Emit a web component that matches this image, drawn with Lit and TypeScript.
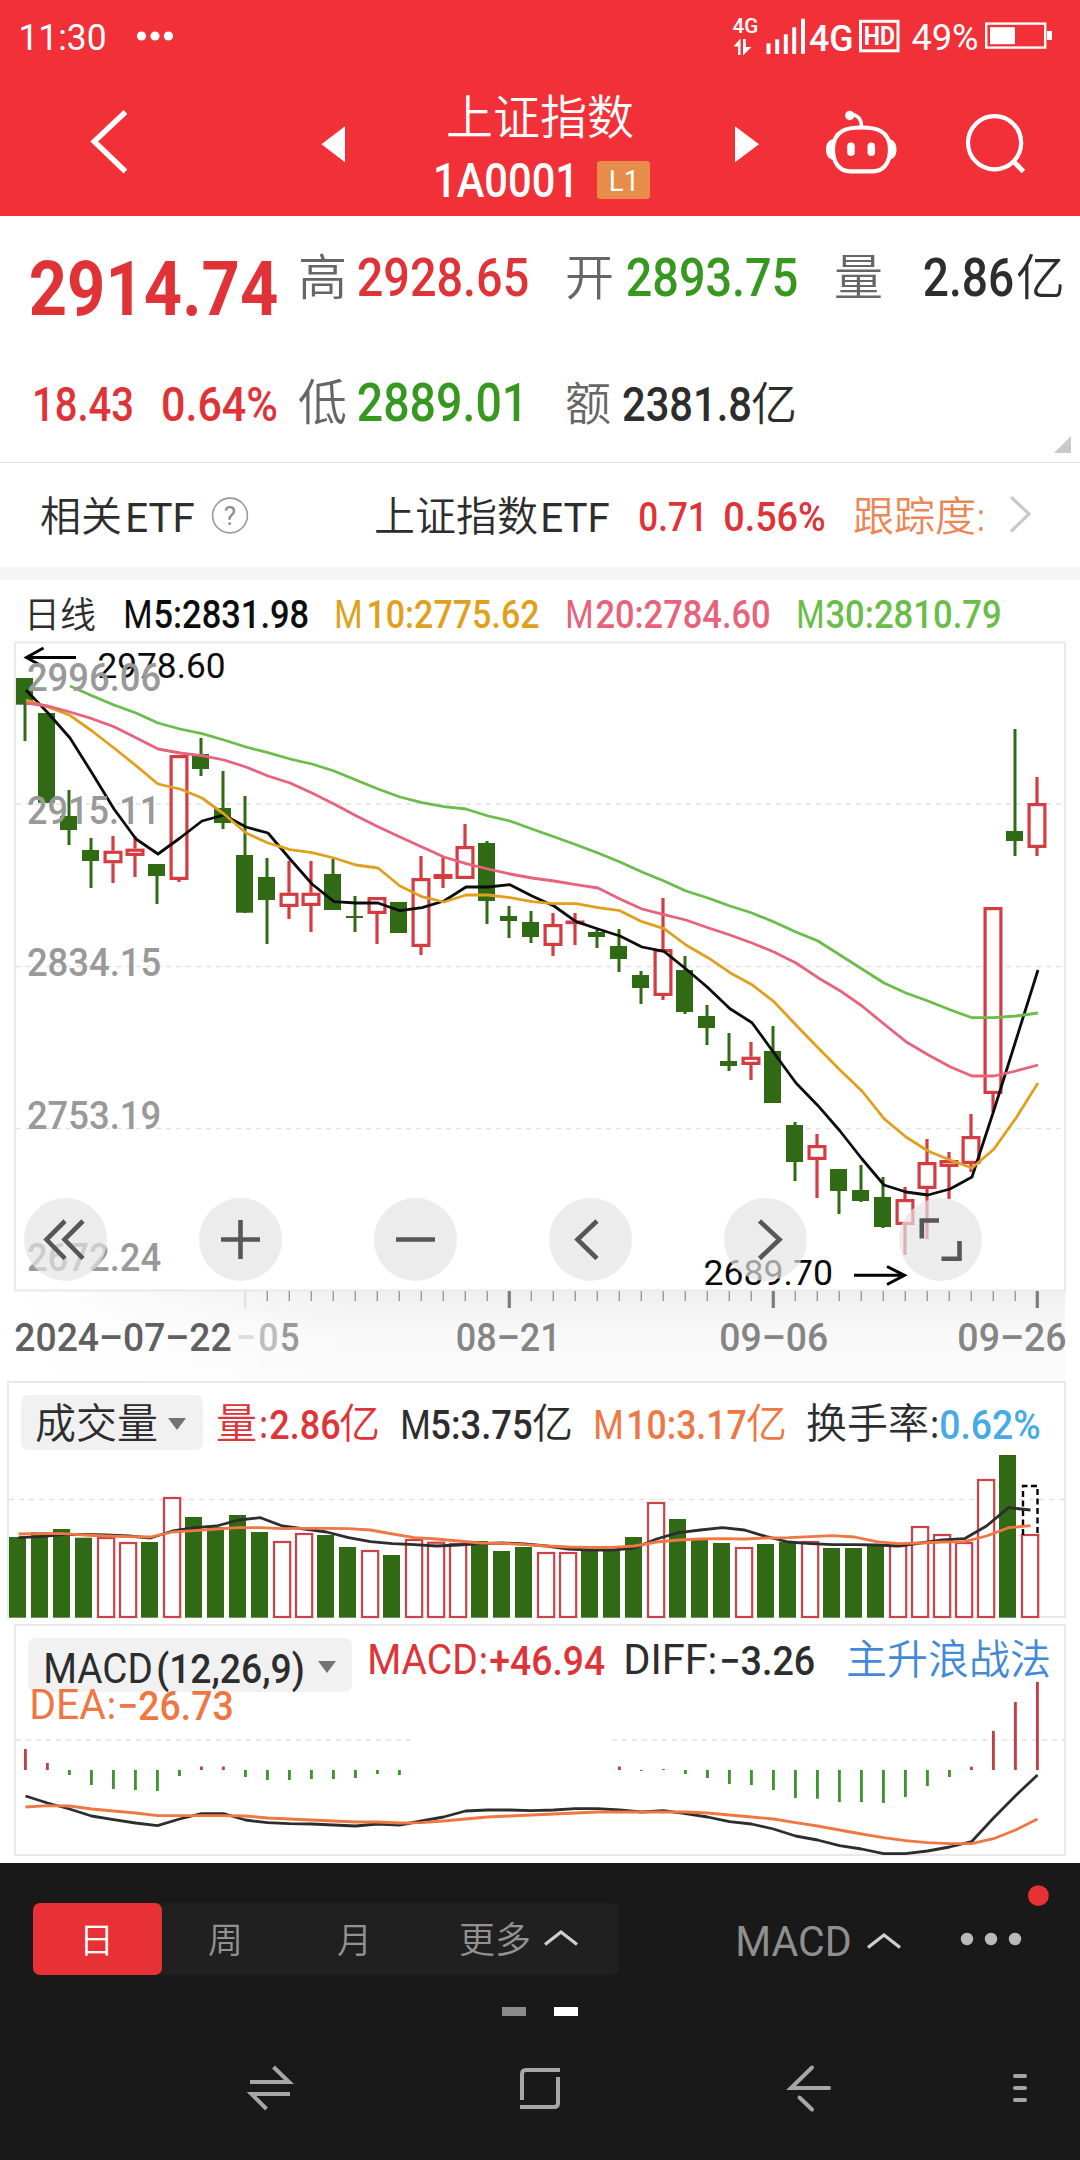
import { LitElement, html, svg, css } from "lit";
import { customElement } from "lit/decorators.js";

const PITCH = 22;

/** Latin or numeric run: the box is the ink box, its bottom edge is the baseline. */
const num = (text: string, width: number, cap: number, cls = "") => html`
  <svg class="run" width=${width} height=${cap}>
    <text class="num ${cls}" x=${-0.06 * cap} y=${cap} font-size=${cap / 0.711}
      textLength=${width + 0.12 * cap} lengthAdjust="spacingAndGlyphs">${text}</text>
  </svg>`;

/** Chinese run: one em per glyph, its bottom edge is the baseline. */
const han = (text: string, size: number, cls = "") => html`
  <svg class="run" width=${text.length * size} height=${Math.round(size * 0.7)}>
    <text class="han ${cls}" x="-1" y=${Math.round(size * 0.7)} font-size=${size}>${text}</text>
  </svg>`;

/** Text inside a chart, placed by its baseline. */
const mark = (text: string, x: number, y: number, width: number, cap: number, cls: string) => svg`
  <text class="num ${cls}" x=${x - 0.06 * cap} y=${y} font-size=${cap / 0.711}
    textLength=${width + 0.12 * cap} lengthAdjust="spacingAndGlyphs">${text}</text>`;

const line = (ys: number[], x0: number, cls: string, first = 0) => svg`
  <polyline class="line ${cls}" points=${ys.map((y, i) => `${x0 + (i + first) * PITCH},${y}`).join(" ")} />`;

// [direction, high, body top, body bottom, low]
type Candle = [string, number, number, number, number];
const CANDLES: Candle[] = [
  ["g", 678, 678, 704.7, 741], ["g", 713, 713, 802.7, 803], ["g", 790, 816, 830, 845], ["g", 838, 850, 861, 888],
  ["r", 836, 850.7, 863.3, 883], ["r", 836, 848.6, 856, 877], ["g", 864, 864, 876, 904], ["r", 755, 755, 880, 882],
  ["g", 738, 754, 769, 776], ["g", 771, 808, 823, 829], ["g", 796, 855, 912.7, 913], ["g", 858, 877, 900, 944],
  ["r", 861, 892.7, 907, 919], ["r", 861, 892.7, 906, 932], ["g", 859, 874, 910, 910], ["g", 896, 916, 918, 932],
  ["r", 897, 897, 914, 944], ["g", 902, 902, 933, 933], ["r", 856, 878, 947, 955], ["r", 856, 874, 879, 888],
  ["r", 824, 846, 879, 879], ["g", 841, 843, 901, 924], ["g", 906, 916, 921, 938], ["g", 911, 922, 937, 943],
  ["r", 913, 924, 946, 956], ["r", 913, 920.5, 924, 945], ["g", 930, 932, 937, 948], ["g", 929, 946, 959, 972],
  ["g", 971, 975, 988, 1004], ["r", 898, 949, 996, 1000], ["g", 956, 970, 1012, 1014], ["g", 1005, 1016, 1028, 1045],
  ["g", 1033, 1061, 1066, 1071], ["r", 1042, 1056.7, 1065, 1080], ["g", 1026, 1051, 1103, 1103], ["g", 1122, 1125, 1162, 1181],
  ["r", 1134, 1145, 1160, 1198], ["g", 1169, 1169, 1191, 1214], ["g", 1165, 1190, 1201, 1202], ["g", 1177, 1197, 1227, 1228],
  ["r", 1187, 1199, 1225, 1255], ["r", 1139, 1162, 1189, 1239], ["r", 1152, 1160, 1167, 1199], ["r", 1114, 1136, 1164, 1172],
  ["r", 907, 907, 1094, 1112], ["g", 729, 831, 841, 856], ["r", 777, 803, 848, 856],
];

const M5 = [690, 713, 738, 773, 809, 839, 854, 838, 821, 815, 827, 833, 859, 884, 901.7, 903, 903, 910.7, 907.7, 901, 887, 887, 884.7, 896, 906, 921.7, 929, 936, 947, 951.3, 969, 987.7, 1008.7, 1022.7, 1053, 1083, 1105.7, 1131, 1159, 1185, 1192, 1195, 1189, 1177, 1110, 1040, 970];
const M10 = [700, 707, 715.3, 731, 748, 765.7, 784, 789, 798, 814, 833, 843, 849.7, 852.7, 858, 865, 868, 886, 896.7, 902, 895, 895, 897.7, 901.7, 903.7, 903.7, 907.7, 910.7, 921.7, 928.7, 945, 957.7, 972.7, 984.7, 1001.7, 1025, 1047.7, 1070, 1091, 1118.7, 1137, 1151, 1160, 1168, 1149, 1118, 1083];
const M20 = [703, 706, 712, 718.7, 726.7, 737.7, 749, 753, 755.7, 760, 767, 776, 783, 793, 804, 815.7, 826.7, 837, 847, 857, 863.7, 869, 874, 878, 881, 884.7, 888, 899, 909, 914.7, 920, 927.7, 935, 943, 952, 963, 977.7, 990.7, 1006, 1024, 1041.7, 1054.7, 1066.7, 1076, 1076, 1071, 1065];
const M30 = [686, 695.7, 705, 713, 723, 729, 733.7, 740, 747, 752.7, 759, 764, 771, 780, 789, 797, 802.7, 806.7, 809, 816, 821, 829, 836.7, 844.7, 853, 862, 872, 881, 891, 898, 906, 913, 922, 932, 941, 955, 969, 983, 993, 1001, 1009.7, 1017.7, 1017.7, 1016, 1013];

const VOL_DIR = "ggggrrgrggggrrggrgrrrgggrrgggrgggrggrgggrrrrrgr";
const VOL = [1537, 1532, 1529, 1537.7, 1537, 1542, 1542, 1497, 1517, 1527, 1515, 1532, 1541, 1533, 1535, 1547, 1550, 1555, 1539, 1541.7, 1543, 1541, 1551, 1547, 1552, 1552, 1550, 1550, 1537, 1502, 1519, 1540, 1543, 1547, 1544, 1541.7, 1541, 1548, 1548, 1545, 1545, 1526, 1534, 1542, 1479, 1455, 1534];
const VM5 = [1537.7, 1536.7, 1534.7, 1534.5, 1535, 1536, 1538, 1531, 1527.7, 1526, 1520, 1517.7, 1526, 1529, 1532, 1537.7, 1541.7, 1543.7, 1544.7, 1546, 1545, 1543.7, 1543, 1544, 1546, 1549, 1550, 1550, 1548, 1539, 1532.7, 1530, 1527.7, 1530, 1536.7, 1542, 1543.7, 1544.7, 1544.7, 1545, 1546, 1543, 1540, 1538.7, 1526, 1507.7, 1510];
const VM10 = [1534, 1533.5, 1533.7, 1535, 1536, 1536.7, 1537, 1532, 1530.7, 1529, 1527.7, 1527.7, 1528.7, 1528.4, 1528.4, 1528.7, 1530, 1534, 1537.7, 1539, 1541, 1543, 1543.3, 1544.7, 1546, 1547, 1547.3, 1547.3, 1546, 1542, 1540, 1539, 1538.7, 1539, 1538, 1537.7, 1536.7, 1535.7, 1537, 1541.7, 1543.7, 1543, 1542, 1541.7, 1536, 1527.7, 1525.7];

const ZERO = 1770;
const HIST = [1749, 1763, 1775, 1785, 1789, 1790, 1791, 1776, 1766.5, 1766.5, 1777, 1780, 1780, 1779, 1779, 1778, 1774, 1775, ZERO, ZERO, ZERO, ZERO, ZERO, ZERO, ZERO, ZERO, ZERO, 1766.5, 1771, 1769, 1774, 1778, 1784, 1785, 1790, 1798, 1798.7, 1802, 1802, 1803, 1797, 1786, 1777, 1766.7, 1731, 1702, 1682];
const DIFF = [1796, 1803, 1809, 1816, 1819.7, 1823, 1825.7, 1819, 1813.7, 1813.7, 1820, 1822.7, 1823.7, 1824, 1825, 1826, 1824, 1825, 1821, 1817, 1811, 1810, 1810, 1810.7, 1810, 1808.7, 1808.7, 1810, 1812, 1810.7, 1813.7, 1817, 1821.7, 1824, 1829, 1836, 1840, 1845.7, 1849, 1853.7, 1853.7, 1851, 1847, 1841.7, 1818, 1795.7, 1775];
const DEA = [1807, 1805.7, 1806, 1809, 1811, 1813, 1815.7, 1815.7, 1815.7, 1815.7, 1816, 1818, 1819, 1820, 1821, 1822, 1822, 1823, 1822.7, 1821, 1819, 1817, 1816, 1815, 1814, 1813, 1812, 1812, 1812, 1812, 1812, 1813, 1815, 1817, 1819, 1822.7, 1826, 1830, 1834, 1837.7, 1840.7, 1842.7, 1843.7, 1843.7, 1838.7, 1830, 1819];

const textStyles = css`
  .run { display: block; overflow: visible; flex: none; }
  text { fill: currentColor; }
  .num { font-family: Roboto, "Liberation Sans", sans-serif; font-weight: 500; }
  .reg { font-weight: 400; }
  .bold { font-weight: 700; }
  .han { font-family: "Noto Sans CJK SC", sans-serif; font-weight: 350; }
  .up { color: #e03338; }
  .down { color: #36981f; }
  .ink { color: #2d2d2d; }
  .mute { color: #666; }
  .amber { color: #e0a01c; }
  .pink { color: #e8627b; }
  .lime { color: #6abd49; }
  .orange { color: #ee7743; }
  .sky { color: #46a9e8; }
  .line { fill: none; stroke: currentColor; stroke-width: 2.8; stroke-linejoin: round; }
  .grid { stroke: #e2e2e2; stroke-width: 1.3; stroke-dasharray: 5 5; }
  .frame { fill: none; stroke: #e9e9e9; stroke-width: 2; }
  .black { color: #0c0c0c; }
`;

@customElement("top-bar")
class TopBar extends LitElement {
  static styles = [textStyles, css`
    :host { display: block; height: 216px; background: #f23037; color: #fff; }
    .status { display: flex; height: 72px; align-items: center; padding: 0 28px 0 20px; }
    .dots { margin-left: 31px; }
    .signal { margin-left: auto; margin-right: 12px; }
    .battery { margin-left: 8px; }
    .clock { padding-top: 2px; }
    .nav { display: grid; height: 144px; grid-template-columns: 322px 113px 300px 91px 139px 1fr; }
    .title { display: flex; flex-direction: column; }
    .name { display: flex; height: 62px; align-items: flex-end; padding-left: 12px; }
    .code { display: flex; height: 63px; align-items: flex-end; gap: 20px; }
    .badge { display: flex; width: 53px; height: 38px; margin-bottom: -2px; border-radius: 3px; background: #e58d49;
      align-items: center; justify-content: center; }
    svg { display: block; overflow: visible; }
    .st { fill: none; stroke: currentColor; }
    .solid { fill: currentColor; }
  `];
  render() {
    return html`
      <div class="status">
        <div class="clock">${num("11:30", 85, 26, "reg")}</div>
        <svg class="dots" width="38" height="12"><g class="solid"><circle cx="5.5" cy="6" r="4.6" /><circle cx="19" cy="6" r="4.6" /><circle cx="32.4" cy="6" r="4.6" /></g></svg>
        <svg class="signal" width="169" height="72" viewBox="732 0 169 72">
          ${mark("4G", 733.5, 32.7, 24, 14.5, "")}
          <g class="solid">
            <path d="M738 55V46.500h-4.500l7-8V55zM743 39h2.800V47h5.600l-8.400 8.500z" />
            <rect x="766.5" y="43.3" width="4" height="10.6" /><rect x="775.2" y="39.3" width="4" height="14.6" />
            <rect x="783.8" y="34.3" width="4" height="19.6" /><rect x="792.2" y="27.3" width="4" height="26.6" />
            <rect x="801" y="18.7" width="4" height="35.2" />
          </g>
          ${mark("4G", 810.5, 51, 41.5, 26, "")}
          <rect class="st" x="860.5" y="21.3" width="37.5" height="29.5" stroke-width="3" />
          ${mark("HD", 864.8, 45, 29, 18, "bold")}
        </svg>
        <div class="clock">${num("49%", 64, 26, "reg")}</div>
        <svg class="battery" width="67" height="28">
          <rect class="st" x="1.2" y="1.6" width="59" height="24" stroke-width="2.4" />
          <rect class="solid" x="5" y="5.2" width="25" height="17" /><rect class="solid" x="62" y="9" width="5" height="9" />
        </svg>
      </div>
      <div class="nav">
        <svg width="322" height="144" viewBox="0 72 322 144"><path class="st" stroke-width="5.4" d="M125.5 112L94.2 141.5L125.5 171.5" /></svg>
        <svg width="113" height="144" viewBox="322 72 113 144"><path class="solid" d="M321.5 144.3L345 126.3V162.3z" /></svg>
        <div class="title">
          <div class="name">${han("上证指数", 47)}</div>
          <div class="code">${num("1A0001", 142, 34)}<div class="badge">${num("L1", 28, 21, "reg")}</div></div>
        </div>
        <svg width="91" height="144" viewBox="735 72 91 144"><path class="solid" d="M759 144.3L735 126.3V162.3z" /></svg>
        <svg width="139" height="144" viewBox="826 72 139 144">
          <path class="st" stroke-width="4.2" d="M861.5 127.5c13 0 28.500 2 28.500 22 0 14-7 21.800-17 21.800h-23c-10 0-17-7.800-17-21.800 0-20 15.500-22 28.500-22z" />
          <path class="solid" d="M833.500 139c-5 1-7.500 4.500-7.500 10.500s2.500 9.500 7.500 10.500zM889 139c5 1 7.500 4.500 7.500 10.500s-2.500 9.500-7.500 10.500z" />
          <rect class="solid" x="847.200" y="142.500" width="7.600" height="13.600" rx="3.800" /><rect class="solid" x="867.500" y="142.500" width="7.600" height="13.600" rx="3.800" />
          <circle class="solid" cx="849.800" cy="115.500" r="4.700" />
          <path class="st" stroke-width="3.600" d="M850 114.500c6.500-.5 11.500 4 11.500 12" />
        </svg>
        <svg width="115" height="144" viewBox="965 72 115 144">
          <circle class="st" cx="994.600" cy="142.700" r="26.600" stroke-width="4.200" />
          <path class="st" stroke-width="4.800" d="M1013.500 161.500L1023.500 171.500" />
        </svg>
      </div>`;
  }
}

@customElement("quote-panel")
class QuotePanel extends LitElement {
  static styles = [textStyles, css`
    :host { display: block; background: #fff; }
    .quote { display: grid; grid-template-columns: 267px 1fr; height: 247px; padding-left: 32px; border-bottom: 1px solid #e3e3e3; box-sizing: border-box; }
    .last, .change, .cells { display: flex; align-items: flex-end; }
    .last { height: 99px; }
    .change { height: 105.500px; gap: 31px; padding-left: 2px; }
    .cells { display: grid; align-items: end; grid-template-columns: 60px 207px 61.500px 207.500px 90px 92px 50px; height: 79px; }
    .cells.low { grid-template-columns: 60px 207px 58px 128px 50px; height: 125px; }
    .more { height: 33px; display: flex; justify-content: flex-end; align-items: flex-end; padding-right: 9px; }
    .etf { display: grid; align-items: end; height: 68px; padding: 0 0 36px 41px;
      grid-template-columns: 86px 84.500px 163.500px 167px 98px 85px 129px 124.500px 32px 1fr; }
    .band { height: 13px; background: #f5f5f5; }
    .help { display: block; overflow: visible; }
    .etfc { color: #ec8654; }
    .chev { display: block; overflow: visible; fill: none; stroke: #c8c8c8; stroke-width: 3.200; }
    .ring { fill: none; stroke: #999; stroke-width: 1.600; }
    .q { fill: #8a8a8a; font: 400 26px Roboto, sans-serif; }
  `];
  render() {
    return html`
      <div class="quote">
        <div>
          <div class="last up">${num("2914.74", 243, 54, "bold")}</div>
          <div class="change up">${num("18.43", 98, 34.500)}${num("0.64%", 113, 34.500)}</div>
        </div>
        <div>
          <div class="cells">
            ${han("高", 49, "mute")}${num("2928.65", 168, 37.500, "up")}
            ${han("开", 49, "mute")}${num("2893.75", 168, 37.500, "down")}
            ${han("量", 49, "mute")}${num("2.86", 87, 37.500, "ink")}${han("亿", 49, "ink")}
          </div>
          <div class="cells low">
            ${han("低", 49, "mute")}${num("2889.01", 167, 37.500, "down")}
            ${han("额", 46, "mute")}${num("2381.8", 126, 34.500, "ink")}${han("亿", 46, "ink")}
          </div>
          <div class="more"><svg width="17" height="17"><path fill="#c9c9c9" d="M17 0V17H0z" /></svg></div>
        </div>
      </div>
      <div class="etf">
        ${han("相关", 41, "ink")}${num("ETF", 66, 29.500, "ink reg")}
        <svg class="help" width="36" height="34"><circle class="ring" cx="18" cy="18.500" r="17.400" /><text class="q" x="18" y="28" text-anchor="middle">?</text></svg>
        ${han("上证指数", 41, "ink")}${num("ETF", 66, 29.500, "ink reg")}
        ${num("0.71", 66, 29, "up")}${num("0.56%", 99, 29, "up")}
        ${han("跟踪度", 41, "etfc")}${num(":", 4, 28, "etfc reg")}
        <svg class="chev" width="20" height="34"><path d="M0 0L18 17L0 34.500" /></svg>
      </div>
      <div class="band"></div>`;
  }
}

@customElement("price-chart")
class PriceChart extends LitElement {
  static styles = [textStyles, css`
    :host { display: block; position: relative; background: #fff; }
    .legend { display: grid; align-items: end; height: 48px; padding-left: 25px;
      grid-template-columns: 99.700px 30.300px 181.500px 32px 199px 29.500px 201px 29.500px 180px; }
    .chart { display: block; margin-top: 12px; }
    .gb { fill: #306a14; }
    .rb { fill: #fff; stroke: #d43c42; stroke-width: 3.200; }
    .gw { stroke: #306a14; stroke-width: 3; }
    .rw { stroke: #d43c42; stroke-width: 3.200; }
    .axis { color: #999; }
    .arrow { fill: none; stroke: #000; stroke-width: 3; }
    .tick { stroke: #9a9a9a; stroke-width: 1.400; }
    .major { stroke: #7d7d7d; stroke-width: 3.200; }
    .faded { stroke: #dedede; stroke-width: 2; }
    .date { color: #858585; }
    .cursor { color: #606060; }
    .f1 { color: #dcdcdc; }
    .f2 { color: #bdbdbd; }
    .f3 { color: #999; }
    .tools { position: absolute; left: 24px; top: 618px; display: flex; gap: 92px; }
    .tool { width: 83px; height: 83px; border-radius: 50%; background: rgba(227, 227, 227, 0.69); }
    .tool svg { display: block; fill: none; stroke: #575757; stroke-width: 4.600; }
  `];
  private candle([dir, high, top, bottom, low]: Candle, i: number) {
    const x = 25 + i * PITCH;
    if (dir === "g") {
      return svg`<path class="gw" d=${`M${x} ${high}V${low}`} /><rect class="gb" x=${x - 9} y=${top} width="17" height=${bottom - top} />`;
    }
    return svg`<path class="rw" d=${`M${x} ${high}V${top}M${x} ${bottom}V${low}`} />
      <rect class="rb" x=${x - 7.900} y=${top + 1.600} width="15.800" height=${Math.max(bottom - top - 3.200, 0.500)} />`;
  }
  render() {
    const tools = ["M41 23L22.500 41.500L41 60.500M59 23L40.500 41.500L59 60.500", "M22 41.500H61M41.500 22V61", "M22 41.500H61",
      "M48 23L28.500 41.500L48 60.500", "M35.500 23L55.500 41.500L35.500 60.500", "M40 22.500H22.800V40.500M42.500 60.800H60.500V43"];
    return html`
      <div class="legend">
        ${han("日线", 36, "ink")}
        ${num("M", 26, 28, "black reg")}${num("5:2831.98", 152.500, 27, "black")}
        ${num("M", 25, 28, "amber reg")}${num("10:2775.62", 170, 27, "amber")}
        ${num("M", 25, 28, "pink reg")}${num("20:2784.60", 172, 27, "pink")}
        ${num("M", 25, 28, "lime reg")}${num("30:2810.79", 173, 27, "lime")}
      </div>
      <svg class="chart" width="1080" height="741" viewBox="0 640 1080 741">
        <defs>
          <linearGradient id="v" x2="0" y2="1"><stop offset="0" stop-color="#efefef" /><stop offset=".45" stop-color="#f8f8f8" /><stop offset="1" stop-color="#fbfbfb" /></linearGradient>
          <linearGradient id="h"><stop offset="0" stop-color="#fff" /><stop offset="1" stop-color="#fff" stop-opacity="0" /></linearGradient>
        </defs>
        <rect x="15" y="1290" width="1050" height="91" fill="url(#v)" />
        <rect x="15" y="1290" width="350" height="91" fill="url(#h)" />
        <rect class="frame" x="15" y="642.500" width="1050" height="648" />
        <path class="grid" d="M16 804H1064M16 966.500H1064M16 1128.500H1064" />
        ${CANDLES.map((c, i) => this.candle(c, i))}
        ${line(M5, 26, "black")}${line(M10, 26, "amber")}${line(M20, 26, "pink")}${line(M30, 26, "lime", 2)}
        <path class="arrow" d="M76 657.500H27M43.500 648L26.500 657.500L43.500 667" />
        ${mark("2978.60", 99, 677.700, 125, 24.700, "reg black")}
        ${mark("2996.06", 28.600, 690.700, 131, 28, "axis")}
        ${mark("2915.11", 28.600, 823.700, 130, 28, "axis")}
        ${mark("2834.15", 28.600, 975.500, 131, 28, "axis")}
        ${mark("2753.19", 28.600, 1129, 131, 28, "axis")}
        ${mark("2672.24", 28.600, 1270.700, 131, 28, "axis")}
        ${mark("2689.70", 705, 1284.700, 126.500, 24.500, "reg black")}
        <path class="arrow" d="M854 1275.300H904M887 1266.500L904.500 1275.300L887 1284.500" />
        ${CANDLES.map((_, i) => {
          if (i < 10) return "";
          const major = (i - 10) % 12 === 0;
          return svg`<path class=${i === 10 ? "faded" : major ? "major" : "tick"} d=${`M${25.300 + i * PITCH} 1291V${major ? 1308 : 1301}`} />`;
        })}
        ${mark("2024–07–22", 16, 1350.700, 214, 28, "cursor")}
        ${mark("–", 238, 1350.700, 16, 28, "f1")}${mark("0", 260, 1350.700, 17, 28, "f2")}${mark("5", 281.500, 1350.700, 16.500, 28, "f3")}
        ${mark("08–21", 457.500, 1350.700, 101.500, 28, "date")}
        ${mark("09–06", 721, 1350.700, 105.500, 28, "date")}
        ${mark("09–26", 959, 1350.700, 106, 28, "date")}
      </svg>
      <div class="tools">
        ${tools.map((d) => html`<div class="tool"><svg width="83" height="83"><path d=${d} /></svg></div>`)}
      </div>`;
  }
}

@customElement("volume-chart")
class VolumeChart extends LitElement {
  static styles = [textStyles, css`
    :host { display: grid; height: 242px; background: #fff; }
    .plot, .head { grid-area: 1 / 1; }
    .plot { display: block; }
    .head { display: grid; align-items: end; align-self: start; height: 57px; padding-left: 217px;
      grid-template-columns: 43.500px 10.500px 69px 62px 30px 101px 62px 33px 119px 60px 124.500px 9.500px 1fr; }
    .chip { grid-area: 1 / 1; align-self: start; margin: 14px 0 0 21px; width: 182px; height: 55px; border-radius: 7px; background: #f1f1f1; }
    .inner { display: flex; height: 43px; align-items: flex-end; padding-left: 15px; gap: 9px; box-sizing: border-box; }
    .tri { display: block; margin-bottom: 8px; }
    .gb { fill: #306a14; }
    .rb { fill: #fff; stroke: #cb4349; stroke-width: 2.200; }
    .est { fill: none; stroke: #000; stroke-width: 2.400; stroke-dasharray: 6 3.500; }
  `];
  render() {
    return html`
      <svg class="plot" width="1080" height="242" viewBox="0 1381 1080 242">
        <path class="frame" d="M8 1618V1382H1065V1617H1030" />
        <path class="grid" d="M9 1499.500H1064" />
        ${VOL.map((y, i) => VOL_DIR[i] === "g"
          ? svg`<rect class="gb" x=${9 + i * PITCH} y=${y} width="17" height=${1617.700 - y} />`
          : svg`<rect class="rb" x=${10 + i * PITCH} y=${y + 1} width="16.200" height=${1617 - y - 1} />`)}
        <path class="est" d="M1023 1535V1486H1037.500V1535" />
        ${line(VM5, 18.500, "ink")}${line(VM10, 18.500, "orange")}
      </svg>
      <div class="chip"><div class="inner">${han("成交量", 41, "ink")}<svg class="tri" width="18" height="12"><path fill="#737373" d="M0 0H18L9 12z" /></svg></div></div>
      <div class="head">
        ${han("量", 41, "up")}${num(":", 5, 27, "up")}${num("2.86", 68, 28.500, "up")}${han("亿", 41, "up")}
        ${num("M", 27, 29.500, "ink reg")}${num("5:3.75", 99, 28.500, "ink")}${han("亿", 41, "ink")}
        ${num("M", 27, 29.500, "orange reg")}${num("10:3.17", 117, 28.500, "orange")}${han("亿", 41, "orange")}
        ${han("换手率", 41, "ink")}${num(":", 5, 27, "ink")}${num("0.62%", 98, 28.500, "sky")}
      </div>`;
  }
}

@customElement("macd-chart")
class MacdChart extends LitElement {
  static styles = [textStyles, css`
    :host { display: grid; height: 240px; background: #fff; }
    .plot, .head, .chip { grid-area: 1 / 1; align-self: start; }
    .plot { display: block; }
    .chip { margin: 15px 0 0 28px; width: 324px; height: 54px; border-radius: 7px; background: #f1f1f1; }
    .inner { display: flex; height: 44.500px; align-items: flex-end; padding-left: 16.500px; gap: 7px; box-sizing: border-box; }
    .tri { display: block; margin: 0 0 10px 8px; }
    .head { display: grid; align-items: end; height: 51px; padding-left: 368.500px;
      grid-template-columns: 112px 10px 134px 85.500px 10.500px 126.500px 1fr; }
    .dea { grid-area: 1 / 1; align-self: start; display: flex; gap: 5px; align-items: flex-end; height: 96px; padding-left: 31px; }
    .link { color: #4389d6; }
    .pos { stroke: #bf4047; stroke-width: 2.900; }
    .neg { stroke: #3f9430; stroke-width: 2.900; }
  `];
  render() {
    return html`
      <svg class="plot" width="1080" height="240" viewBox="0 1623 1080 240">
        <rect class="frame" x="15" y="1625" width="1050" height="230" />
        <path class="grid" d="M16 1740H411M612 1740H1064" />
        ${HIST.map((y, i) => y === ZERO ? "" : svg`<path class=${y < ZERO ? "pos" : "neg"} d=${`M${25.400 + i * PITCH} ${ZERO}V${y}`} />`)}
        ${line(DIFF, 25.500, "ink")}${line(DEA, 25.500, "orange")}
      </svg>
      <div class="chip"><div class="inner">${num("MACD", 106, 30, "ink reg")}${num("(12,26,9)", 145, 29, "ink")}<svg class="tri" width="18" height="12"><path fill="#737373" d="M0 0H18L9 12z" /></svg></div></div>
      <div class="head">
        ${num("MACD", 107, 30, "up reg")}${num(":", 5, 28, "up")}${num("+46.94", 112.500, 28.500, "up")}
        ${num("DIFF", 81, 30, "ink reg")}${num(":", 5, 28, "ink")}${num("−3.26", 92.500, 28.500, "ink")}
        ${han("主升浪战法", 41, "link")}
      </div>
      <div class="dea">${num("DEA", 73, 30, "orange reg")}${num(":", 5, 28, "orange")}${num("−26.73", 113, 28.500, "orange")}</div>`;
  }
}

@customElement("bottom-bar")
class BottomBar extends LitElement {
  static styles = [textStyles, css`
    :host { display: block; height: 297px; background: #191919; }
    .bar { display: flex; height: 112px; padding: 40px 0 0 33px; box-sizing: border-box; align-items: flex-start; }
    .seg { display: flex; width: 586px; height: 72px; border-radius: 7px; background: #202020; color: #929292; }
    .item { display: flex; width: 129px; height: 72px; align-items: flex-end; justify-content: center; padding-bottom: 22px; box-sizing: border-box; }
    .on { background: #e83135; color: #fff; border-radius: 7px; }
    .more { display: flex; width: 199px; height: 72px; align-items: flex-end; padding: 0 0 22px 40px; gap: 13px; box-sizing: border-box; }
    .caret { display: block; fill: none; stroke: #cfcfcf; stroke-width: 3.200; overflow: visible; }
    .up8 { margin-bottom: 8px; }
    .ind { display: flex; height: 72px; align-items: flex-end; gap: 18px; padding: 0 0 19px 118px; box-sizing: border-box; color: #8f8f8f; }
    .dots { display: block; margin: -32px 0 0 61px; overflow: visible; }
    .pages { display: flex; justify-content: center; gap: 28px; padding-top: 32px; height: 9px; }
    .page { width: 24px; height: 9px; background: #8a8a8a; }
    .page.cur { background: #fff; }
    .keys { display: grid; grid-template-columns: 500px 250px 250px 80px; height: 142px; }
    .key { display: block; fill: none; stroke: #a6a6a6; stroke-width: 4; }
  `];
  render() {
    const caret = html`<svg class="caret up8" width="32" height="14"><path d="M0 13.500L16 1L32 13.500" /></svg>`;
    return html`
      <div class="bar">
        <div class="seg">
          <div class="item on">${han("日", 35)}</div><div class="item">${han("周", 35)}</div><div class="item">${han("月", 35)}</div>
          <div class="more">${han("更多", 36)}${caret}</div>
        </div>
        <div class="ind">${num("MACD", 113, 30, "reg")}${caret}</div>
        <svg class="dots" width="90" height="90" viewBox="961 1871 90 90">
          <g fill="#b9b9b9"><circle cx="967" cy="1939" r="6.200" /><circle cx="991" cy="1939" r="6.200" /><circle cx="1015" cy="1939" r="6.200" /></g>
          <circle cx="1038.400" cy="1895.700" r="10.400" fill="#e83135" />
        </svg>
      </div>
      <div class="pages"><div class="page"></div><div class="page cur"></div></div>
      <div class="keys">
        <svg class="key" width="500" height="142" viewBox="0 2016 500 142"><path d="M250 2082H289L273.500 2067M290 2094H251.500L266.500 2109" /></svg>
        <svg class="key" width="250" height="142" viewBox="500 2016 250 142"><path d="M522 2100V2074q0-4 4-4H560M520 2107H554q4 0 4-4V2077" /></svg>
        <svg class="key" width="250" height="142" viewBox="750 2016 250 142"><path stroke-linecap="round" d="M829 2088H791L812 2067.500M799.500 2097.500L812 2109.500" /></svg>
        <svg class="key" width="80" height="142" viewBox="1000 2016 80 142"><path stroke-linecap="round" d="M1015 2076H1025M1015 2088H1025M1015 2100H1025" /></svg>
      </div>`;
  }
}

@customElement("app-root")
class AppRoot extends LitElement {
  static styles = css`
    :host { display: flex; flex-direction: column; width: 1080px; height: 2160px; background: #fff; overflow: hidden; }
  `;
  render() {
    return html`
      <top-bar></top-bar>
      <quote-panel></quote-panel>
      <price-chart></price-chart>
      <volume-chart></volume-chart>
      <macd-chart></macd-chart>
      <bottom-bar></bottom-bar>`;
  }
}
